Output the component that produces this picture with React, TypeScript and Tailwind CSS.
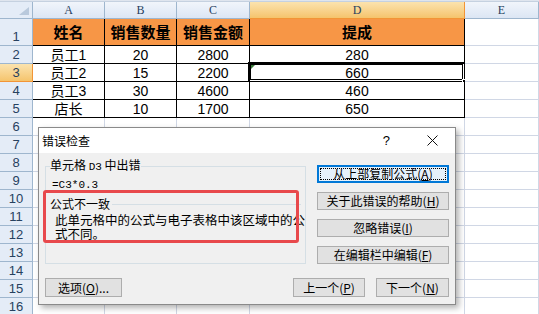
import React from 'react'

const colW = ['w-[72px]', 'w-[72px]', 'w-[73px]', 'w-[215px]', 'w-[74px]']
const letters = ['A', 'B', 'C', 'D', 'E']

const data: string[][] = [
  ['姓名', '销售数量', '销售金额', '提成'],
  ['员工1', '20', '2800', '280'],
  ['员工2', '15', '2200', '660'],
  ['员工3', '30', '4600', '460'],
  ['店长', '10', '1700', '650'],
]

const rows = Array.from({ length: 16 }, (_, i) => i + 1)

function Cell({ r, c }: { r: number; c: number }) {
  const inTable = r <= 5 && c <= 3
  const text = inTable ? data[r - 1][c] : ''
  const selected = r === 3 && c === 3
  const border = inTable ? 'border-r border-b border-black' : 'border-r border-b border-[#d0d7e5]'
  const bg = r === 1 && c <= 3 ? 'bg-[#f79646]' : 'bg-white'
  const font = r === 1 ? 'font-bold text-[15px] items-center pt-[2px]' : 'text-[14px] items-end'

  return (
    <div className={`relative ${colW[c]} ${border} ${bg} ${font} flex justify-center leading-[16px] text-black`}>
      {text}
      {selected && (
        <>
          <div className="absolute left-[-2px] top-[-2px] right-[-1px] bottom-[-1px] border-[3px] border-double border-black" />
          <svg className="absolute left-[1px] top-[1px]" width="4" height="4">
            <polygon points="0,0 4,0 0,4" fill="#3a7a3a" />
          </svg>
          <div className="absolute right-[-4px] bottom-[-4px] w-[6px] h-[6px] bg-black border border-white" />
        </>
      )}
    </div>
  )
}

function Btn({ children, className = '', focus = false }: { children: React.ReactNode; className?: string; focus?: boolean }) {
  if (focus) {
    return (
      <div className={`h-[18px] flex p-px border-2 border-[#0078d7] bg-[#e5f1fb] ${className}`}>
        <div className="flex-1 flex items-center justify-center border border-dotted border-black text-[12px] leading-none">
          {children}
        </div>
      </div>
    )
  }
  return (
    <div className={`flex items-center justify-center border border-[#adadad] bg-[#e1e1e1] text-[12px] leading-none ${className}`}>
      {children}
    </div>
  )
}

const U = ({ c }: { c: string }) => <span className="underline underline-offset-1">{c}</span>

export default function App() {
  return (
    <div
      className="relative w-[539px] h-[314px] overflow-hidden bg-white"
      style={{ fontFamily: '"Liberation Sans", "Noto Sans CJK SC", sans-serif' }}
    >
      <div className="h-[2px] bg-[#dfe5ee] border-b border-[#c5d1e0]" />
      <div className="flex h-[17px]">
        <div className="relative w-[33px] bg-[#e4ecf7] border-r border-b border-[#9eb6ce]">
          <svg className="absolute right-[3px] bottom-[3px]" width="10" height="8">
            <polygon points="10,0 10,8 0,8" fill="#b9c9dc" />
          </svg>
        </div>
        {letters.map((l, c) =>
          c === 3 ? (
            <div
              key={l}
              className={`${colW[c]} flex items-center justify-center bg-gradient-to-b from-[#fbe3ae] to-[#f5c46c] border-r border-b border-[#f29536] text-[12px] text-[#27415f]`}
              style={{ fontFamily: '"Liberation Serif", serif' }}
            >
              {l}
            </div>
          ) : (
            <div
              key={l}
              className={`${colW[c]} flex items-center justify-center bg-gradient-to-b from-[#f1f5fb] to-[#dce6f4] border-r border-b border-[#9eb6ce] text-[12px] text-[#27415f]`}
              style={{ fontFamily: '"Liberation Serif", serif' }}
            >
              {l}
            </div>
          )
        )}
      </div>
      {rows.map((r) => (
        <div key={r} className={`flex ${r === 1 ? 'h-[27px]' : 'h-[18px]'}`}>
          <div
            className={`w-[33px] flex items-end justify-center pb-px border-r border-b text-[13px] leading-[15px] text-[#27415f] ${
              r === 3 ? 'bg-gradient-to-b from-[#fbe3ae] to-[#f5c46c] border-[#f29536]' : 'bg-[#e4ecf7] border-[#9eb6ce]'
            }`}
          >
            {r}
          </div>
          {letters.map((l, c) => (
            <Cell key={l} r={r} c={c} />
          ))}
        </div>
      ))}

      {/* 错误检查 dialog */}
      <div
        className="absolute left-[38px] top-[127px] w-[418px] h-[178px] flex flex-col border border-[#8a8a8a] bg-[#f0f0f0] shadow-[3px_3px_6px_rgba(0,0,0,0.3)] text-black"
        style={{ fontFamily: '"Noto Sans CJK SC", sans-serif' }}
      >
        <div className="h-[25px] flex items-center bg-white pl-[3px] text-[12px]">
          <span>错误检查</span>
          <span className="ml-auto text-[13px]" style={{ fontFamily: '"Liberation Sans", sans-serif' }}>?</span>
          <svg className="ml-[37px] mr-[17px]" width="11" height="11" viewBox="0 0 11 11">
            <path d="M0.5 0.5 L10.5 10.5 M10.5 0.5 L0.5 10.5" stroke="#111" strokeWidth="1" />
          </svg>
        </div>

        <div className="relative flex-1 flex flex-col px-[6px] pb-[7px]">
          <div className="flex">
            <fieldset className="mt-[4px] w-[257px] h-[107px] border border-[#d5dfe5] pl-[4px]">
              <legend className="text-[12px] leading-[16px]">
                单元格 <span className="text-[11px]" style={{ fontFamily: '"Liberation Mono", monospace' }}>D3</span> 中出错
              </legend>
              <div className="ml-[2px] mt-[2px] text-[11px] leading-[16px]" style={{ fontFamily: '"Liberation Mono", monospace' }}>
                =C3*0.3
              </div>
              <div className="mt-[3px] flex items-center text-[12px] leading-[16px]">
                <span>公式不一致</span>
                <div className="flex-1 h-px bg-[#d5dfe5] ml-[2px] mr-[4px]" />
              </div>
              <p className="ml-[5px] mt-px text-[12.5px] leading-[14px] whitespace-nowrap">
                此单元格中的公式与电子表格中该区域中的公
                <br />
                式不同。
              </p>
            </fieldset>

            <div className="ml-[11px] mt-[12px] w-[135px] flex flex-col gap-[9px]">
              <Btn focus>
                从上部复制公式(<U c="A" />)
              </Btn>
              <Btn className="h-[18px]">
                关于此错误的帮助(<U c="H" />)
              </Btn>
              <Btn className="h-[18px]">
                忽略错误(<U c="I" />)
              </Btn>
              <Btn className="h-[18px]">
                在编辑栏中编辑(<U c="F" />)
              </Btn>
            </div>
          </div>

          <div className="mt-auto flex items-end">
            <Btn className="w-[77px] h-[19px]">
              选项(<U c="O" />)...
            </Btn>
            <Btn className="ml-auto w-[72px] h-[19px]">
              上一个(<U c="P" />)
            </Btn>
            <Btn className="ml-[11px] w-[73px] h-[19px]">
              下一个(<U c="N" />)
            </Btn>
          </div>

          {/* red annotation box */}
          <div className="absolute left-[4px] top-[37px] w-[256px] h-[53px] border-[3px] border-[#e8494c] rounded-[3px]" />
        </div>
      </div>
    </div>
  )
}
